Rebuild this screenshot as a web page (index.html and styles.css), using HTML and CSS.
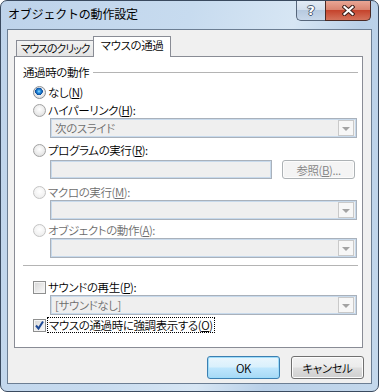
FILE: index.html
```html
<!DOCTYPE html>
<html lang="ja">
<head>
    <meta charset="UTF-8">
    <meta name="viewport" content="width=device-width, initial-scale=1.0">
    <title>オブジェクトの動作設定</title>
    <link rel="stylesheet" href="styles.css">
</head>
<body>

    <div class="window">
        <!-- Barre de titre -->
        <div class="titlebar">
            <div class="title">オブジェクトの動作設定</div>
            <div class="caption">
                <div class="caption-btn help">?</div>
                <div class="caption-btn close">
                    <svg width="13" height="11" viewBox="0 0 13 11">
                        <path d="M2.5 2 L10.5 9 M10.5 2 L2.5 9" stroke="#3b1e19" stroke-width="4.2" stroke-linecap="square"/>
                        <path d="M2.5 2 L10.5 9 M10.5 2 L2.5 9" stroke="#ffffff" stroke-width="2.2" stroke-linecap="square"/>
                    </svg>
                </div>
            </div>
        </div>

        <div class="client">
            <!-- Onglets -->
            <div class="tabs">
                <div class="tab">マウスのクリック</div>
                <div class="tab active">マウスの通過</div>
            </div>

            <div class="panel">
                <div class="legend"><span>通過時の動作</span><div class="rule"></div></div>

                <div class="opt mt4"><span class="radio checked"></span>なし(<u>N</u>)</div>
                <div class="opt mt2"><span class="radio"></span>ハイパーリンク(<u>H</u>):</div>
                <div class="combo mt1"><span class="value">次のスライド</span><span class="drop"><i></i></span></div>

                <div class="opt mt4"><span class="radio"></span>プログラムの実行(<u>R</u>):</div>
                <div class="field-row mt2">
                    <div class="textbox"></div>
                    <div class="btn disabled">参照(<u>B</u>)...</div>
                </div>

                <div class="opt mt5 off"><span class="radio"></span>マクロの実行(<u>M</u>):</div>
                <div class="combo mt1"><span class="value"></span><span class="drop"><i></i></span></div>

                <div class="opt mt2 off"><span class="radio"></span>オブジェクトの動作(<u>A</u>):</div>
                <div class="combo mt3"><span class="value"></span><span class="drop"><i></i></span></div>

                <div class="separator"></div>

                <div class="opt sound"><span class="check"></span>サウンドの再生(<u>P</u>):</div>
                <div class="combo"><span class="value">[サウンドなし]</span><span class="drop"><i></i></span></div>

                <div class="opt mt2">
                    <span class="check checked">
                        <svg width="11" height="11" viewBox="0 0 11 11"><path d="M2 5.5 L4.5 8.5 L9 1.5" fill="none" stroke="#1f4a96" stroke-width="2"/></svg>
                    </span>
                    <span class="focus">マウスの通過時に強調表示する(<u>O</u>)</span>
                </div>
            </div>

            <div class="buttons">
                <div class="btn default">OK</div>
                <div class="btn">キャンセル</div>
            </div>
        </div>
    </div>

</body>
</html>
```

FILE: styles.css
```css
html {
    background: #ffffff;
}
body {
    margin: 0;
    font-family: "Noto Sans CJK JP", sans-serif;
    font-size: 12px;
    font-weight: 350;
    color: #000;
}
.window {
    width: 379px;
    height: 392px;
    box-sizing: border-box;
    border: 1px solid #3a4a5f;
    border-radius: 7px;
    background: linear-gradient(105deg, #bed3ea 0%, #c7dbef 40%, #d7e6f4 62%, #b9d0e8 76%, #c4d8ec 100%);
    padding: 0 6px 7px 6px;
    display: flex;
    flex-direction: column;
}
.titlebar {
    height: 28px;
    display: flex;
    align-items: flex-start;
}
.title {
    flex: 1;
    padding-left: 1px;
    line-height: 26px;
    font-size: 12px;
    font-weight: 400;
    letter-spacing: -0.2px;
}
.caption {
    display: flex;
    margin-right: 1px;
}
.caption-btn {
    height: 20px;
    box-sizing: border-box;
    display: flex;
    align-items: center;
    justify-content: center;
}
.help {
    width: 29px;
    border: 1px solid #56667b;
    border-top: none;
    border-right: none;
    border-radius: 0 0 0 5px;
    background: linear-gradient(#e2ebf5 0%, #d3dfed 45%, #b7cae0 50%, #c8d8ea 100%);
    font-family: "DejaVu Sans", sans-serif;
    font-weight: bold;
    font-size: 13px;
    color: #fff;
    text-shadow: 1px 0 0 #4a5a70, -1px 0 0 #4a5a70, 0 1px 0 #4a5a70, 0 -1px 0 #4a5a70;
}
.close {
    width: 46px;
    border: 1px solid #4a2a25;
    border-top: none;
    border-radius: 0 0 5px 0;
    background: linear-gradient(#e8a695 0%, #d98571 45%, #c5442d 50%, #d4735c 100%);
}
.client {
    flex: 1;
    border: 1px solid #6c7e93;
    background: #f0f0f0;
    padding: 6px 8px 0 6px;
    font-size: 11.5px;
    letter-spacing: -0.4px;
}

/* Onglets */
.tabs {
    height: 20px;
    display: flex;
    align-items: flex-end;
    padding-left: 2px;
}
.tab {
    width: 78px;
    height: 16px;
    box-sizing: border-box;
    border: 1px solid #898c95;
    border-bottom: none;
    background: linear-gradient(#f3f3f3, #e4e4e4);
    font-feature-settings: "palt";
    font-size: 11px;
    letter-spacing: -1.1px;
    line-height: 15px;
    text-align: center;
    white-space: nowrap;
}
.tab.active {
    height: 21px;
    margin-bottom: -1px;
    margin-left: -1px;
    background: #fff;
    font-size: 11.5px;
    letter-spacing: -0.4px;
    line-height: 17px;
    position: relative;
    z-index: 1;
}
.panel {
    height: 292px;
    box-sizing: border-box;
    border: 1px solid #898c95;
    background: #fff;
    font-feature-settings: "palt";
}
.legend {
    display: flex;
    align-items: center;
    height: 16px;
    margin: 7px 4px 0 8px;
}
.rule {
    flex: 1;
    height: 1px;
    background: #b4b4b4;
    margin-left: 4px;
}
.opt {
    display: flex;
    align-items: center;
    height: 16px;
    padding-left: 18px;
    white-space: nowrap;
}
.opt.off {
    color: #6d6d6d;
}
.opt.sound {
    margin-top: 13px;
}
.mt1 { margin-top: 1px; }
.mt2 { margin-top: 2px; }
.mt3 { margin-top: 3px; }
.mt4 { margin-top: 4px; }
.mt5 { margin-top: 5px; }
u {
    text-underline-offset: 1px;
}
.radio {
    width: 13px;
    height: 13px;
    box-sizing: border-box;
    border-radius: 50%;
    border: 1px solid #a2a2a2;
    background: radial-gradient(circle at 50% 40%, #ffffff 0%, #ebebeb 55%, #d6d6d6 100%);
    margin-right: 2px;
    flex: none;
}
.radio.checked {
    border-color: #8a8f96;
    background: radial-gradient(circle at 45% 40%, #9fdcff 0, #2c97e3 1.5px, #125fb4 3px, #0d4d99 3.6px, transparent 4px),
                radial-gradient(circle at 50% 40%, #ffffff 0%, #ebebeb 55%, #d6d6d6 100%);
}
.off .radio {
    border-color: #c4c4c4;
    background: radial-gradient(circle at 50% 40%, #ffffff 0%, #f2f2f2 60%, #e6e6e6 100%);
}
.check {
    width: 13px;
    height: 13px;
    box-sizing: border-box;
    border: 1px solid #8e8f8f;
    background: linear-gradient(135deg, #d6d6d6, #fbfbfb);
    box-shadow: inset 0 0 0 1px #f4f4f4;
    margin-right: 2px;
    flex: none;
    display: flex;
    align-items: center;
    justify-content: center;
}
.focus {
    border: 1px dotted #000;
    padding: 0 1px;
    line-height: 14px;
    margin-left: -1px;
}

/* Listes et champs */
.combo {
    height: 20px;
    box-sizing: border-box;
    margin: 0 5px 0 35px;
    border: 1px solid #a9b1bb;
    box-shadow: inset 0 0 0 1px #c8daec;
    background: #efefef;
    display: flex;
    align-items: center;
    color: #6d6d6d;
}
.combo .value {
    flex: 1;
    padding-left: 4px;
}
.drop {
    width: 16px;
    height: 16px;
    box-sizing: border-box;
    margin-right: 2px;
    border: 1px solid #c9c9c9;
    background: #f7f7f7;
    display: flex;
    align-items: center;
    justify-content: center;
}
.drop i {
    width: 0;
    height: 0;
    border-left: 4px solid transparent;
    border-right: 4px solid transparent;
    border-top: 4px solid #a3a3a3;
    margin-top: 1px;
}
.field-row {
    display: flex;
    margin-left: 35px;
    height: 19px;
}
.textbox {
    width: 222px;
    box-sizing: border-box;
    border: 1px solid #a9b1bb;
    box-shadow: inset 0 0 0 1px #c8daec;
    background: #efefef;
}
.field-row .btn {
    margin-left: 10px;
    height: 19px;
}
.separator {
    height: 1px;
    background: #b4b4b4;
    margin: 7px 4px 0 8px;
}

/* Boutons */
.btn {
    width: 73px;
    box-sizing: border-box;
    border: 1px solid #707070;
    border-radius: 3px;
    background: linear-gradient(#f2f2f2 0%, #ebebeb 48%, #dddddd 52%, #cfcfcf 100%);
    box-shadow: inset 0 0 0 1px #fcfcfc;
    display: flex;
    align-items: center;
    justify-content: center;
    font-feature-settings: "palt";
}
.btn.disabled {
    border-color: #adb2b5;
    background: #f4f4f4;
    color: #838383;
}
.btn.default {
    border-color: #3c7fb1;
    background: linear-gradient(#eaf6fd 0%, #d9f0fc 48%, #bee6fd 52%, #a7d9f5 100%);
    box-shadow: inset 0 0 0 1px #9edcfa;
}
.buttons {
    display: flex;
    justify-content: flex-end;
    gap: 11px;
    margin: 8px -1px 0 0;
}
.buttons .btn {
    height: 23px;
}
```
